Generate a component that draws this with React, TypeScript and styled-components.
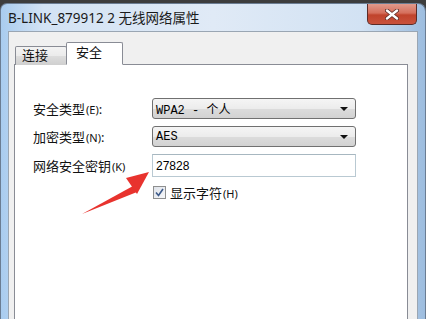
import { createGlobalStyle, styled } from "styled-components"

const GlobalStyle = createGlobalStyle`
    html, body {
        margin: 0;
        padding: 0;
        background: #3d3d3d;
        overflow: hidden;
    }
    body {
        width: 426px;
        height: 319px;
    }
`;

const uiFont = `"Noto Sans", "Noto Sans CJK SC", sans-serif`;

const Window = styled.div`
    margin-top: 3px;
    width: 426px;
    height: 316px;
    box-sizing: border-box;
    border-radius: 7px 8px 0 0;
    border: 1px solid #6b7d93;
    border-bottom: none;
    background: linear-gradient(90deg, #a9ccef 0%, #d3e3f4 10%, #e0eaf6 50%, #d2e2f3 85%, #9dbddf 100%);
    display: flex;
    flex-direction: column;
`;

const TitleBar = styled.div`
    height: 27px;
    display: flex;
    align-items: flex-start;
    padding-left: 7px;
`;

const Title = styled.span`
    font-family: ${uiFont};
    font-size: 13.5px;
    color: #1a1a1a;
    line-height: 28px;
`;

const CloseButton = styled.div`
    margin-left: auto;
    margin-right: 8px;
    width: 50px;
    height: 21px;
    box-sizing: border-box;
    border: 1px solid #5b2b27;
    border-top: none;
    border-radius: 0 0 5px 5px;
    background: linear-gradient(180deg, #e19a8c 0%, #d56f5c 45%, #c0432c 55%, #c9523c 100%);
    display: flex;
    align-items: center;
    justify-content: center;
`;

const Panel = styled.div`
    flex: 1;
    margin: 0 7px 0 7px;
    background: #f0f0f0;
    border: 1px solid #9aa6b3;
    border-bottom: none;
    padding: 10px 9px 0 5px;
    display: flex;
    flex-direction: column;
`;

const TabStrip = styled.div`
    display: flex;
    align-items: flex-end;
    height: 23px;
    padding-left: 1px;
    position: relative;
    z-index: 1;
`;

const Tab = styled.div<{ $active?: boolean }>`
    font-family: ${uiFont};
    font-size: 13px;
    color: #111;
    box-sizing: border-box;
    height: ${p => (p.$active ? "23px" : "19px")};
    padding: ${p => (p.$active ? "0 20px 0 9px" : "0 18px 0 6px")};
    line-height: ${p => (p.$active ? "19px" : "17px")};
    border: 1px solid #898c95;
    border-bottom: ${p => (p.$active ? "1px solid #fff" : "none")};
    border-radius: 2px 2px 0 0;
    background: ${p => (p.$active ? "#fff" : "linear-gradient(180deg, #f3f3f3 0%, #ebebeb 50%, #dddddd 51%, #cfcfcf 100%)")};
    margin-left: ${p => (p.$active ? "-1px" : "0")};
`;

const TabPage = styled.div`
    flex: 1;
    margin-top: -1px;
    background: #fff;
    border: 1px solid #898c95;
    border-bottom: none;
    padding: 33px 0 0 18px;
    position: relative;
`;

const Form = styled.div`
    display: grid;
    grid-template-columns: 119px 204px;
    row-gap: 7px;
    align-items: center;
`;

const Label = styled.span`
    font-family: ${uiFont};
    font-size: 13px;
    color: #111;
    white-space: nowrap;
`;

const Key = styled.span`
    font-size: 11px;
    margin-left: 1px;
`;

const Combo = styled.div`
    height: 21px;
    box-sizing: border-box;
    border: 1px solid #707070;
    border-radius: 3px;
    background: linear-gradient(180deg, #f5f5f5 0%, #ececec 50%, #dcdcdc 51%, #d2d2d2 100%);
    display: flex;
    align-items: center;
    padding: 0 5px 0 3px;
    font-family: "Liberation Mono", "Noto Sans CJK SC", monospace;
    font-size: 12px;
    color: #000;
`;

const Arrow = styled.span`
    margin-left: auto;
    width: 0;
    height: 0;
    border-left: 4px solid transparent;
    border-right: 4px solid transparent;
    border-top: 4px solid #111;
    margin-right: 2px;
`;

const TextBox = styled.div`
    height: 23px;
    box-sizing: border-box;
    border: 1px solid #b9c9d2;
    border-top-color: #a7b7c0;
    background: #fff;
    display: flex;
    align-items: center;
    padding-left: 3px;
    font-family: "Liberation Sans", sans-serif;
    font-size: 12px;
    color: #000;
`;

const CheckRow = styled.label`
    grid-column: 2;
    display: flex;
    align-items: center;
    gap: 4px;
    margin-top: -1px;
    margin-left: 1px;
`;

const CheckBox = styled.span`
    width: 13px;
    height: 13px;
    box-sizing: border-box;
    border: 1px solid #8e8f8f;
    background: linear-gradient(135deg, #dfe3ea 0%, #f6f7f9 100%);
    display: flex;
    align-items: center;
    justify-content: center;
`;

const Pointer = styled.svg`
    position: absolute;
    left: 62px;
    top: 103px;
`;

export default function App(){
    return(
        <>
            <GlobalStyle />
            <Window>
                <TitleBar>
                    <Title>B-LINK_879912 2 无线网络属性</Title>
                    <CloseButton>
                        <svg width="14" height="11" viewBox="0 0 14 11">
                            <path d="M2 1.5 L12 9.5 M12 1.5 L2 9.5" stroke="#5a2a26" strokeWidth="4" strokeLinecap="round"/>
                            <path d="M2 1.5 L12 9.5 M12 1.5 L2 9.5" stroke="#fff" strokeWidth="2.4" strokeLinecap="round"/>
                        </svg>
                    </CloseButton>
                </TitleBar>
                <Panel>
                    <TabStrip>
                        <Tab>连接</Tab>
                        <Tab $active>安全</Tab>
                    </TabStrip>
                    <TabPage>
                        <Form>
                            <Label>安全类型<Key>(E)</Key>:</Label>
                            <Combo>WPA2 - 个人<Arrow /></Combo>
                            <Label>加密类型<Key>(N)</Key>:</Label>
                            <Combo>AES<Arrow /></Combo>
                            <Label>网络安全密钥<Key>(K)</Key></Label>
                            <TextBox>27828</TextBox>
                            <CheckRow>
                                <CheckBox>
                                    <svg width="9" height="9" viewBox="0 0 9 9">
                                        <path d="M1 4.5 L3.5 7.5 L8 1" fill="none" stroke="#3c5a8a" strokeWidth="1.6"/>
                                    </svg>
                                </CheckBox>
                                <Label>显示字符<Key>(H)</Key></Label>
                            </CheckRow>
                        </Form>
                        <Pointer width="100" height="60" viewBox="0 0 100 60">
                            <path d="M5 46 L56 18 L60 24 Z" fill="#e8332e"/>
                            <path d="M72 4 L49 10 L60 26 Z" fill="#e8332e"/>
                        </Pointer>
                    </TabPage>
                </Panel>
            </Window>
        </>
    );
}
